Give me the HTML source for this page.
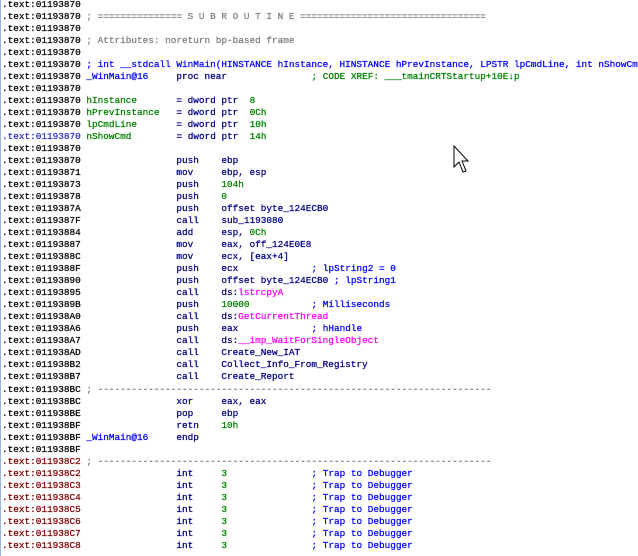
<!DOCTYPE html>
<html><head><meta charset="utf-8"><style>
html,body{margin:0;padding:0;background:#fff;width:638px;height:556px;overflow:hidden;position:relative}
#b{position:absolute;left:0;top:0;width:1px;height:556px;background:#9bb8dc}
pre{position:absolute;left:2px;top:-1px;margin:0;font-family:"Liberation Mono",monospace;font-size:9.4px;line-height:12.02px;color:#000;white-space:pre;-webkit-text-stroke:0.25px currentColor}
.i{color:#000080}.g{color:#808080}.bl{color:#0000ff}.gr{color:#008000}.p{color:#ff00ff}.r{color:#800000}.nb{color:#3030c0}
</style></head><body><div id="b"></div>
<pre>.text:01193870
.text:01193870 <span class="g">; =============== S U B R O U T I N E =================================</span>
.text:01193870
.text:01193870 <span class="g">; Attributes: noreturn bp-based frame</span>
.text:01193870
.text:01193870 <span class="bl">; int __stdcall WinMain(HINSTANCE hInstance, HINSTANCE hPrevInstance, LPSTR lpCmdLine, int nShowCmd)</span>
.text:01193870 <span class="bl">_WinMain@16</span>     <span class="i">proc near</span>               <span class="gr">; CODE XREF: ___tmainCRTStartup+10E↓p</span>
.text:01193870
.text:01193870 <span class="gr">hInstance</span>       <span class="i">= dword ptr</span>  <span class="gr">8</span>
.text:01193870 <span class="gr">hPrevInstance</span>   <span class="i">= dword ptr</span>  <span class="gr">0Ch</span>
.text:01193870 <span class="gr">lpCmdLine</span>       <span class="i">= dword ptr</span>  <span class="gr">10h</span>
<span class="nb">.text:01193870</span> <span class="gr">nShowCmd</span>        <span class="i">= dword ptr</span>  <span class="gr">14h</span>
.text:01193870
.text:01193870                 <span class="i">push    ebp</span>
.text:01193871                 <span class="i">mov     ebp, esp</span>
.text:01193873                 <span class="i">push    </span><span class="gr">104h</span>
.text:01193878                 <span class="i">push    </span><span class="gr">0</span>
.text:0119387A                 <span class="i">push    offset byte_124ECB0</span>
.text:0119387F                 <span class="i">call    sub_1193080</span>
.text:01193884                 <span class="i">add     esp, </span><span class="gr">0Ch</span>
.text:01193887                 <span class="i">mov     eax, off_124E0E8</span>
.text:0119388C                 <span class="i">mov     ecx, [eax+4]</span>
.text:0119388F                 <span class="i">push    ecx             <span class="bl">; lpString2 = 0</span></span>
.text:01193890                 <span class="i">push    offset byte_124ECB0 <span class="bl">; lpString1</span></span>
.text:01193895                 <span class="i">call    ds:</span><span class="p">lstrcpyA</span>
.text:0119389B                 <span class="i">push    </span><span class="gr">10000</span>           <span class="bl">; Milliseconds</span>
.text:011938A0                 <span class="i">call    ds:</span><span class="p">GetCurrentThread</span>
.text:011938A6                 <span class="i">push    eax             <span class="bl">; hHandle</span></span>
.text:011938A7                 <span class="i">call    ds:</span><span class="p">__imp_WaitForSingleObject</span>
.text:011938AD                 <span class="i">call    Create_New_IAT</span>
.text:011938B2                 <span class="i">call    Collect_Info_From_Registry</span>
.text:011938B7                 <span class="i">call    Create_Report</span>
.text:011938BC <span class="g">; ----------------------------------------------------------------------</span>
.text:011938BC                 <span class="i">xor     eax, eax</span>
.text:011938BE                 <span class="i">pop     ebp</span>
.text:011938BF                 <span class="i">retn    </span><span class="gr">10h</span>
.text:011938BF <span class="bl">_WinMain@16</span>     <span class="i">endp</span>
.text:011938BF
<span class="r">.text:011938C2</span> <span class="g">; ----------------------------------------------------------------------</span>
<span class="r">.text:011938C2</span>                 <span class="i">int     </span><span class="gr">3</span>               <span class="bl">; Trap to Debugger</span>
<span class="r">.text:011938C3</span>                 <span class="i">int     </span><span class="gr">3</span>               <span class="bl">; Trap to Debugger</span>
<span class="r">.text:011938C4</span>                 <span class="i">int     </span><span class="gr">3</span>               <span class="bl">; Trap to Debugger</span>
<span class="r">.text:011938C5</span>                 <span class="i">int     </span><span class="gr">3</span>               <span class="bl">; Trap to Debugger</span>
<span class="r">.text:011938C6</span>                 <span class="i">int     </span><span class="gr">3</span>               <span class="bl">; Trap to Debugger</span>
<span class="r">.text:011938C7</span>                 <span class="i">int     </span><span class="gr">3</span>               <span class="bl">; Trap to Debugger</span>
<span class="r">.text:011938C8</span>                 <span class="i">int     </span><span class="gr">3</span>               <span class="bl">; Trap to Debugger</span>
</pre>
<svg style="position:absolute;left:453px;top:145px" width="16" height="32" viewBox="0 0 16 32"><path d="M1 1 L1 22 L6 17 L10 27 L13 26 L9 16 L15 16 Z" fill="#fff" stroke="#000" stroke-width="1"/></svg>
</body></html>
